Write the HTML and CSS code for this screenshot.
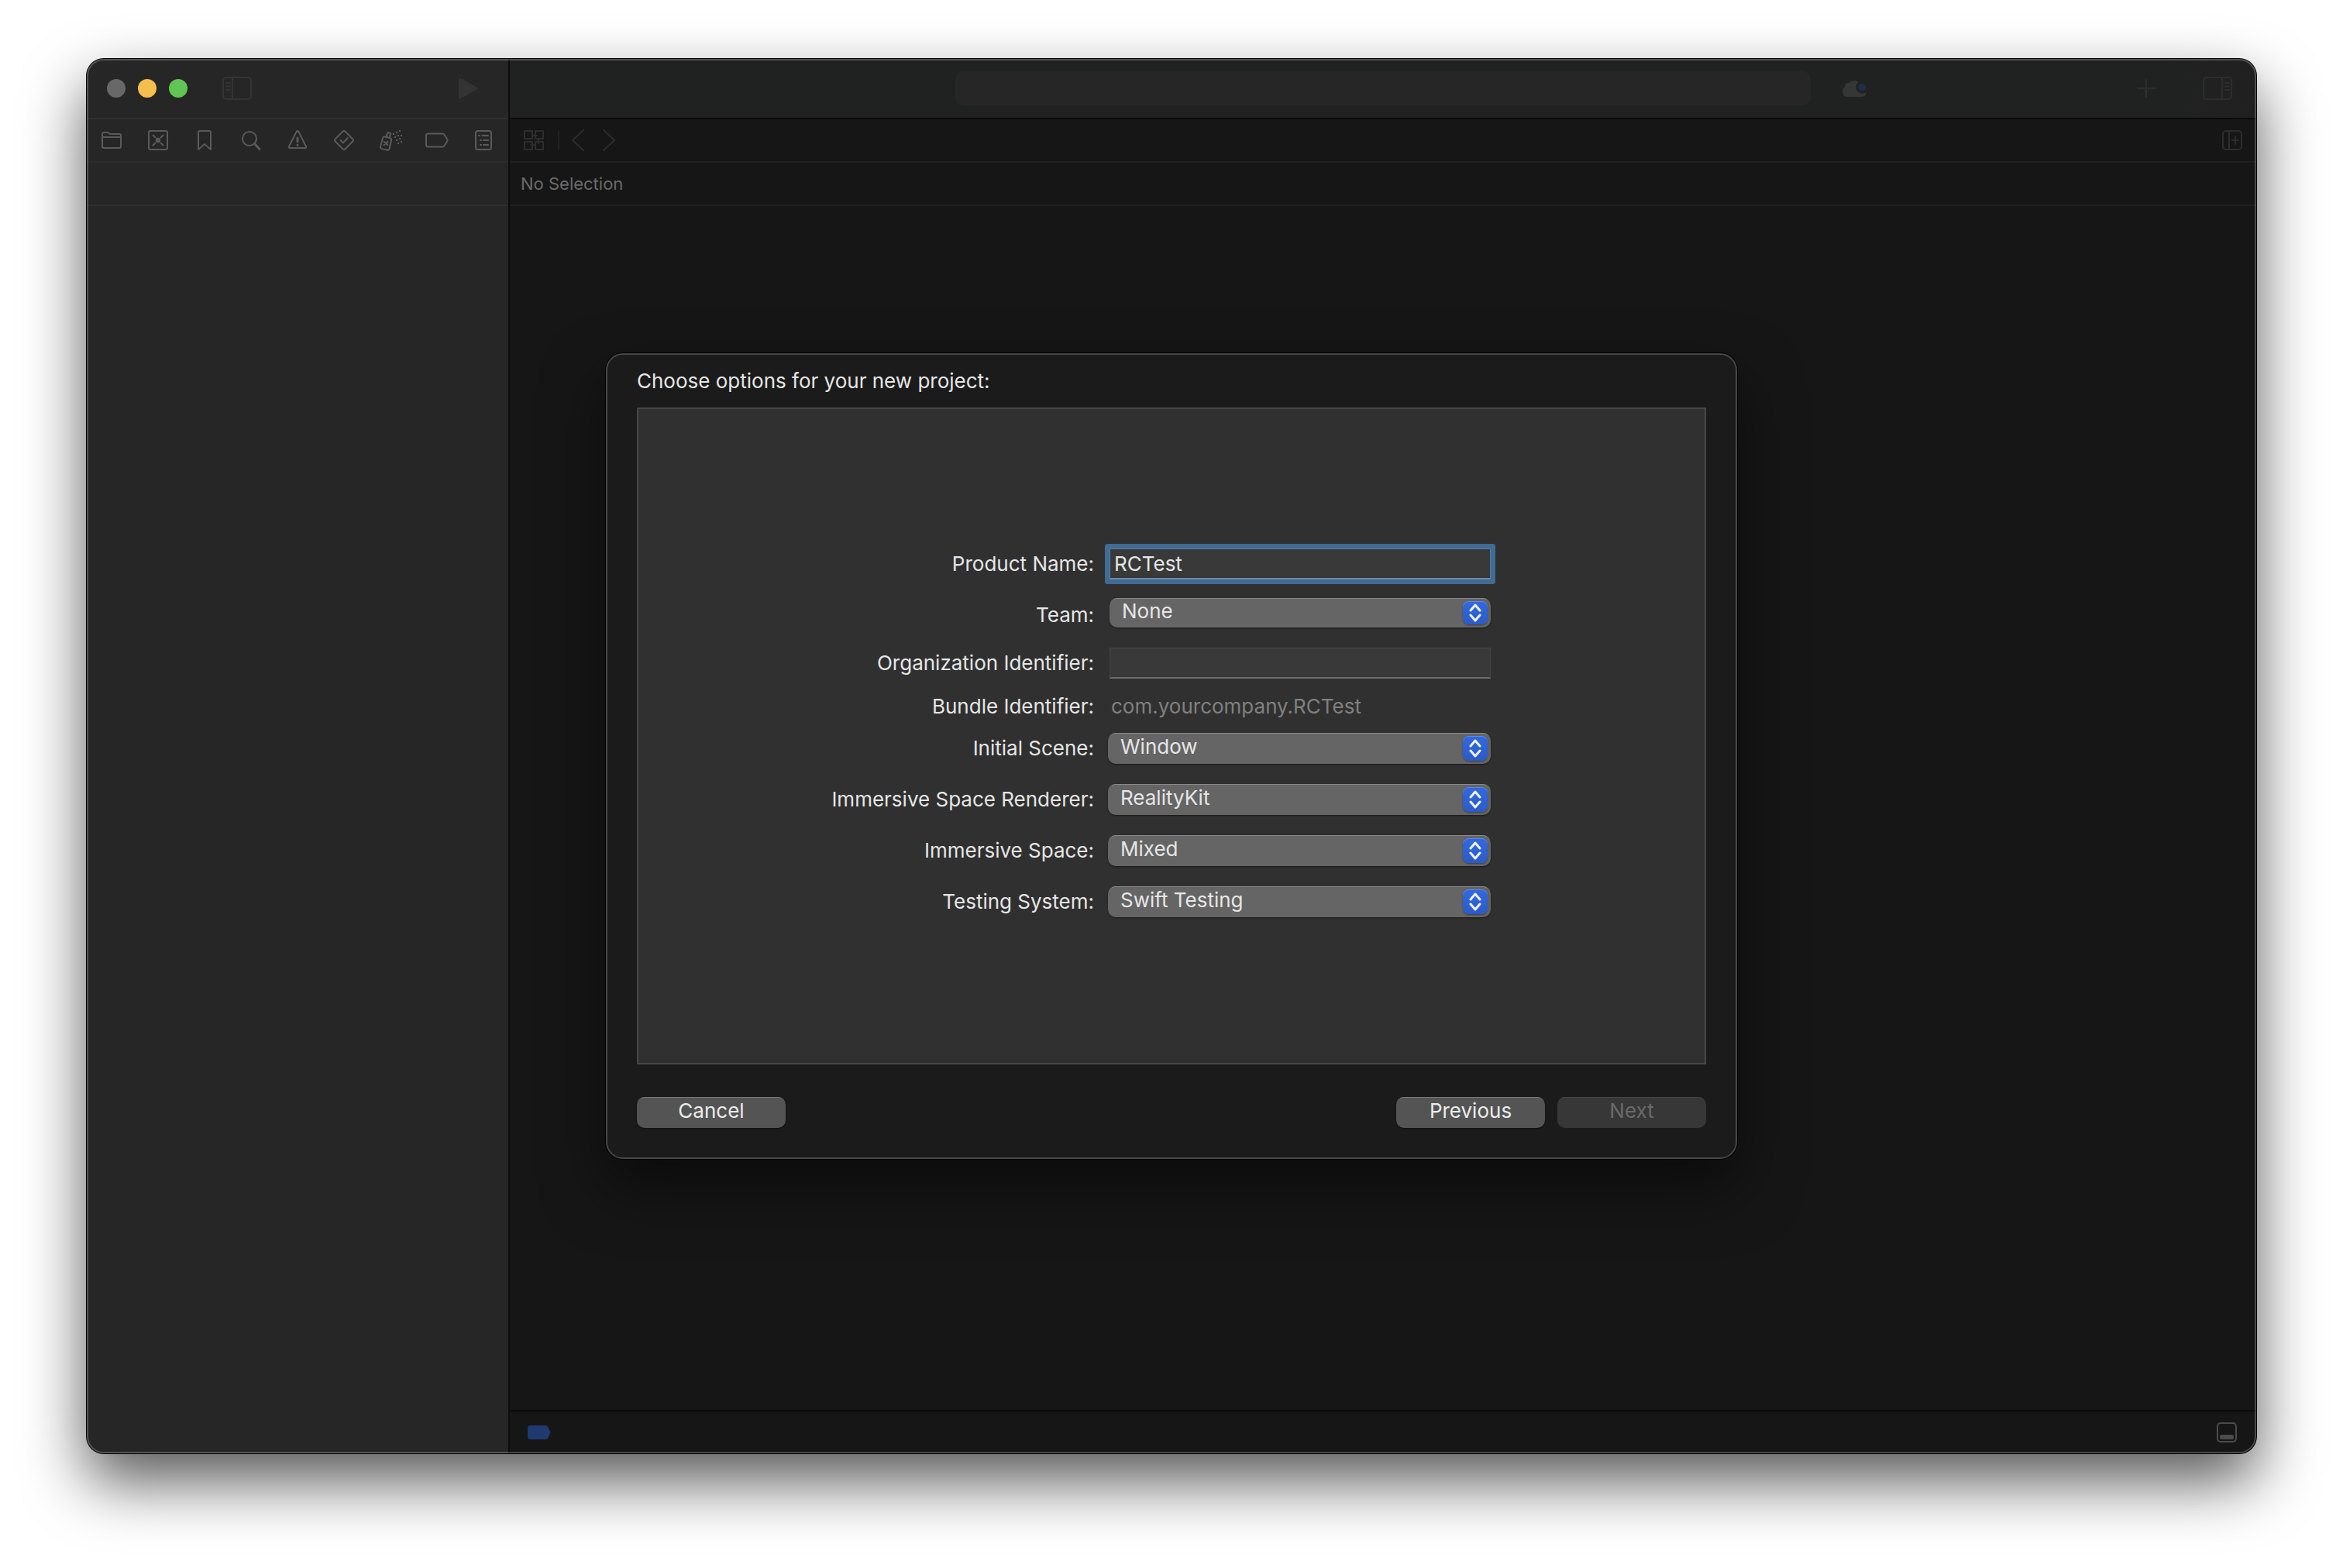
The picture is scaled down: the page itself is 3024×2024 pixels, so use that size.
FILE: index.html
```
<!DOCTYPE html>
<html lang="en">
<head>
  <meta charset="UTF-8" />
  <meta name="viewport" content="width=device-width, initial-scale=1.0"/>
  <title>New Project</title>
  <link rel="stylesheet" href="styles.css">
</head>
<body>

  <div class="window">

    <aside class="sidebar">
      <div class="titlebar">
        <div class="lights">
          <button class="light close" aria-label="Close"></button>
          <button class="light minimize" aria-label="Minimize"></button>
          <button class="light zoom" aria-label="Zoom"></button>
        </div>
        <button class="icon-btn toggle" aria-label="Toggle navigator">
          <svg width="38" height="30" viewBox="0 0 38 30"><rect x="1" y="1" width="36" height="28" rx="4"/><path d="M13 1v28M5 8h5M5 12.500h5M5 17h5"/></svg>
        </button>
        <button class="icon-btn" aria-label="Run">
          <svg width="28" height="28" viewBox="0 0 28 28"><path class="solid" d="M3 1.500v25L26 14z"/></svg>
        </button>
      </div>

      <nav class="navigators">
        <button class="icon-btn" aria-label="Project">
          <svg width="28" height="28" viewBox="0 0 28 28"><path d="M2 22V6q0-2 2-2h5l3 2h12q2 0 2 2v14q0 2-2 2H4q-2 0-2-2zM2 10h24"/></svg>
        </button>
        <button class="icon-btn" aria-label="Source control">
          <svg width="28" height="28" viewBox="0 0 28 28"><rect x="2" y="2" width="24" height="24" rx="2"/><path d="M7.500 7.500l3 3M20.500 7.500l-3 3M7.500 20.500l3-3M20.500 20.500l-3-3"/><circle class="solid" cx="14" cy="14" r="2.200"/></svg>
        </button>
        <button class="icon-btn" aria-label="Bookmarks">
          <svg width="28" height="28" viewBox="0 0 28 28"><path d="M6 26V4q0-2 2-2h12q2 0 2 2v22l-8-7z"/></svg>
        </button>
        <button class="icon-btn" aria-label="Find">
          <svg width="28" height="28" viewBox="0 0 28 28"><circle cx="12" cy="12" r="9"/><path d="M18.500 18.500l6.500 7" stroke-width="3"/></svg>
        </button>
        <button class="icon-btn" aria-label="Issues">
          <svg width="28" height="28" viewBox="0 0 28 28"><path d="M12.700 3q1.300-2 2.600 0L25 22q.7 2-1.200 2H4.200Q2.300 24 3 22z"/><path d="M14 11v5" stroke-width="3"/><circle class="solid" cx="14" cy="20.300" r=".6"/></svg>
        </button>
        <button class="icon-btn" aria-label="Tests">
          <svg width="28" height="28" viewBox="0 0 28 28"><path d="M12.700 2.500q1.300-1.200 2.600 0l10.200 10.200q1.200 1.300 0 2.600L15.300 25.500q-1.300 1.200-2.600 0L2.500 15.300q-1.200-1.300 0-2.600zM9.500 14l3.300 3.500 6-6.500"/></svg>
        </button>
        <button class="icon-btn" aria-label="Debug">
          <svg width="30" height="28" viewBox="0 0 30 28"><path d="M5 11.500q.5-2.500 2.800-2l6.500 1.700q2.300.7 1.800 2.800L13.500 25q-.6 2.300-2.800 1.800l-6.900-1.700q-2.300-.7-1.800-2.800zM9.800 9.500L11.200 4l4 1L13.800 10.700M6.700 16l4.600 4M11.500 15.700l-5 4.600"/><path class="spray" d="M22 4h2M26 2h2M18 6h2M24 8h2M28 8h2M20 10h2M22 14h2M26 12h2M28 16h2M24 18h2"/></svg>
        </button>
        <button class="icon-btn" aria-label="Breakpoints">
          <svg width="30" height="28" viewBox="0 0 30 28"><path d="M1 20V8q0-2.500 2.500-2.500H22q1.700 0 2.600 1.500l3.600 5.800q.7 1.200 0 2.400L24.600 21q-.9 1.500-2.600 1.500H3.500Q1 22.500 1 20z"/></svg>
        </button>
        <button class="icon-btn" aria-label="Reports">
          <svg width="28" height="28" viewBox="0 0 28 28"><rect x="4" y="2" width="20" height="24" rx="2.500"/><path d="M8 8h1M12.500 8H20M10 14h1M14 14h6M10 20h1M14 20h6"/></svg>
        </button>
      </nav>
      <div class="subbar"></div>
    </aside>

    <main class="editor">
      <header class="toolbar">
        <div class="activity"></div>
        <div class="toolbar-right">
          <button class="icon-btn" aria-label="Cloud status">
            <svg class="cloud" width="34" height="24" viewBox="0 0 34 24"><path class="solid" d="M7 22Q2 21.500 2 16.500 2 12 5 11 5 5.500 10 5.500 13 2.500 18 3q3 .7 4.500 3.500L30.500 17q0 4.500-4.500 5z"/><circle class="badge" cx="26.300" cy="10.700" r="6.500"/></svg>
          </button>
          <button class="icon-btn add" aria-label="Add">
            <svg width="24" height="24" viewBox="0 0 24 24"><path d="M12 1v22M1 12h22"/></svg>
          </button>
          <button class="icon-btn" aria-label="Toggle inspector">
            <svg width="38" height="30" viewBox="0 0 38 30"><rect x="1" y="1" width="36" height="28" rx="4"/><path d="M25 1v28M29 8h5M29 12.500h5M29 17h5"/></svg>
          </button>
        </div>
      </header>

      <div class="tabbar">
        <button class="icon-btn" aria-label="Related items">
          <svg width="26" height="26" viewBox="0 0 26 26"><path d="M1 1h10v10H1zM15 1h10v10H15zM1 15h10v10H1zM15 15h10v10H15zM11 7h6M19 11v6M9 19h6"/></svg>
        </button>
        <span class="divider"></span>
        <button class="icon-btn" aria-label="Back">
          <svg width="16" height="28" viewBox="0 0 16 28"><path d="M15 1L1 14l14 13"/></svg>
        </button>
        <button class="icon-btn forward" aria-label="Forward">
          <svg width="16" height="28" viewBox="0 0 16 28"><path d="M1 1l14 13L1 27"/></svg>
        </button>
        <button class="icon-btn split" aria-label="Add editor">
          <svg width="26" height="26" viewBox="0 0 26 26"><rect x="1" y="1" width="24" height="24" rx="4"/><path d="M9 1v24M13 13h8M17 8v10"/></svg>
        </button>
      </div>

      <div class="pathbar">No Selection</div>

      <div class="canvas"></div>

      <footer class="debugbar">
        <button class="icon-btn" aria-label="Toggle breakpoints">
          <svg class="tag" width="30" height="18" viewBox="0 0 30 18"><path d="M3 0h20q2 0 3 1.500L29 7.500q.8 1.500 0 3l-3 6q-1 1.500-3 1.500H3q-3 0-3-3V3q0-3 3-3z"/></svg>
        </button>
        <button class="icon-btn panel" aria-label="Toggle debug area">
          <svg width="26" height="26" viewBox="0 0 26 26"><rect x="1" y="1" width="24" height="24" rx="4"/><rect class="solid" x="5" y="17" width="16" height="4" rx="1"/></svg>
        </button>
      </footer>
    </main>

    <div class="overlay">
      <form class="dialog" onsubmit="return false">
        <h1>Choose options for your new project:</h1>

        <div class="panel-box">
          <div class="group identity">
            <div class="row product">
              <label for="product">Product Name:</label>
              <input class="text-field focused" id="product" type="text" value="RCTest">
            </div>
            <div class="row team">
              <label for="team">Team:</label>
              <div class="popup">
                <select id="team"><option>None</option></select>
                <span class="stepper"><svg width="16" height="24" viewBox="0 0 16 24"><path d="M2 9l6-7 6 7M2 15l6 7 6-7"/></svg></span>
              </div>
            </div>
            <div class="row">
              <label for="org">Organization Identifier:</label>
              <input class="text-field" id="org" type="text">
            </div>
            <div class="row bundle">
              <label for="bundle">Bundle Identifier:</label>
              <output id="bundle">com.yourcompany.RCTest</output>
            </div>
          </div>

          <div class="group scene">
            <div class="row">
              <label for="initial">Initial Scene:</label>
              <div class="popup">
                <select id="initial"><option>Window</option></select>
                <span class="stepper"><svg width="16" height="24" viewBox="0 0 16 24"><path d="M2 9l6-7 6 7M2 15l6 7 6-7"/></svg></span>
              </div>
            </div>
            <div class="row">
              <label for="renderer">Immersive Space Renderer:</label>
              <div class="popup">
                <select id="renderer"><option>RealityKit</option></select>
                <span class="stepper"><svg width="16" height="24" viewBox="0 0 16 24"><path d="M2 9l6-7 6 7M2 15l6 7 6-7"/></svg></span>
              </div>
            </div>
            <div class="row">
              <label for="space">Immersive Space:</label>
              <div class="popup">
                <select id="space"><option>Mixed</option></select>
                <span class="stepper"><svg width="16" height="24" viewBox="0 0 16 24"><path d="M2 9l6-7 6 7M2 15l6 7 6-7"/></svg></span>
              </div>
            </div>
            <div class="row">
              <label for="testing">Testing System:</label>
              <div class="popup">
                <select id="testing"><option>Swift Testing</option></select>
                <span class="stepper"><svg width="16" height="24" viewBox="0 0 16 24"><path d="M2 9l6-7 6 7M2 15l6 7 6-7"/></svg></span>
              </div>
            </div>
          </div>
        </div>

        <div class="actions">
          <button type="button" class="btn cancel">Cancel</button>
          <button type="button" class="btn">Previous</button>
          <button type="submit" class="btn" disabled>Next</button>
        </div>
      </form>
    </div>

  </div>

</body>
</html>
```

FILE: styles.css
```
:root {
  --sidebar-bg: #262626;
  --editor-bg: #161616;
  --toolbar-bg: #202221;
  --text: #e6e6e6;
}

* {
  box-sizing: border-box;
}

body {
  margin: 0;
  min-height: 100vh;
  padding: 76px 112px 148px;
  display: flex;
  background-color: #fff;
  color: var(--text);
  font-family: Inter, "Liberation Sans", sans-serif;
  font-size: 26px;
  line-height: 32px;
}

button,
input,
select {
  font: inherit;
  color: inherit;
}

.window {
  position: relative;
  flex: 1;
  display: flex;
  border-radius: 22px;
  background-color: var(--editor-bg);
  box-shadow: 0 0 0 1px #000, 0 36px 80px rgba(0, 0, 0, 0.66);
}

/* light rim on top of the window content */
.window::after {
  content: "";
  position: absolute;
  inset: 0;
  border: 2px solid rgba(255, 255, 255, 0.22);
  border-radius: 22px;
  pointer-events: none;
}

.icon-btn {
  display: flex;
  align-items: center;
  justify-content: center;
  padding: 0;
  border: none;
  background: none;
}

.icon-btn svg {
  display: block;
  fill: none;
  stroke: currentColor;
  stroke-width: 2;
  stroke-linecap: round;
  stroke-linejoin: round;
}

.icon-btn .solid {
  fill: currentColor;
}

/* sidebar */
.sidebar {
  width: 546px;
  border-right: 2px solid #0c0c0c;
  border-radius: 22px 0 0 22px;
  background-color: var(--sidebar-bg);
}

.titlebar {
  height: 78px;
  padding: 0 38px 0 26px;
  display: flex;
  align-items: center;
  border-bottom: 2px solid #2e2e2e;
  color: #343434;
}

.lights {
  display: flex;
  gap: 16px;
}

.light {
  width: 24px;
  height: 24px;
  padding: 0;
  border: none;
  border-radius: 50%;
}

.close {
  background-color: #686868;
}

.minimize {
  background-color: #f5bf4f;
}

.zoom {
  background-color: #61c554;
}

.toggle {
  margin-left: 45px;
  margin-right: auto;
}

.navigators {
  height: 56px;
  padding: 0 2px;
  display: flex;
  border-bottom: 2px solid #2e2e2e;
  color: #5a5a5a;
}

.navigators .icon-btn {
  flex: 1;
}

.navigators .spray {
  stroke-linecap: butt;
}

.subbar {
  height: 56px;
  border-bottom: 2px solid #2e2e2e;
}

/* editor */
.editor {
  flex: 1;
  display: flex;
  flex-direction: column;
  color: #2d2d2d;
}

.toolbar {
  height: 78px;
  display: grid;
  grid-template-columns: 1fr 49% 1fr;
  align-items: center;
  border-bottom: 2px solid #0b0b0b;
  border-top-right-radius: 22px;
  background: linear-gradient(to right, var(--toolbar-bg) 95%, #212020);
}

.activity {
  grid-column: 2;
  height: 44px;
  border-radius: 10px;
  background-color: #262626;
}

.toolbar-right {
  padding: 0 31px 0 40px;
  display: flex;
  align-items: center;
}

.cloud {
  color: #363636;
}

.cloud .badge {
  fill: #202e4a;
  stroke: var(--toolbar-bg);
  stroke-width: 3;
}

.add {
  margin-left: auto;
  margin-right: 61px;
}

.tabbar {
  height: 56px;
  padding: 0 18px;
  display: flex;
  align-items: center;
  border-bottom: 2px solid #202020;
}

.divider {
  width: 2px;
  height: 24px;
  margin: 0 16px 0 18px;
  background-color: #222;
}

.forward {
  margin-left: 24px;
}

.split {
  margin-left: auto;
}

.pathbar {
  height: 56px;
  padding: 0 14px;
  border-bottom: 2px solid #202020;
  color: #6a6a6a;
  font-size: 22px;
  line-height: 54px;
}

.canvas {
  flex: 1;
}

.debugbar {
  height: 56px;
  padding: 0 25px 0 23px;
  display: flex;
  align-items: center;
  justify-content: space-between;
  border-top: 2px solid #0b0b0b;
}

.tag path {
  fill: #1f3a6e;
  stroke: none;
}

.panel {
  color: #4b4b4b;
}

/* dialog */
.overlay {
  position: absolute;
  inset: 0;
  display: flex;
  align-items: center;
  justify-content: center;
}

.dialog {
  width: 1460px;
  padding: 18px 38px 38px;
  border: 2px solid #474747;
  border-radius: 22px;
  background-color: #1b1b1b;
  box-shadow: 0 0 0 1px #000, 0 36px 80px rgba(0, 0, 0, 0.5);
}

h1 {
  margin: 0 0 18px;
  font-size: 26px;
  font-weight: 400;
  line-height: 32px;
}

.panel-box {
  min-height: 848px;
  padding: 180px 276px 188px 0;
  border: 2px solid #474747;
  background-color: #303030;
}

.group {
  display: flex;
  flex-direction: column;
}

.identity {
  gap: 20px;
  margin-bottom: 22px;
}

.scene {
  gap: 26px;
}

.row {
  display: grid;
  grid-template-columns: 588px 1fr;
  column-gap: 18px;
  align-items: center;
}

.identity .row {
  column-gap: 20px;
}

.product {
  margin-bottom: 4px;
}

.team {
  height: 44px;
}

.bundle {
  height: 28px;
}

label {
  text-align: right;
}

.text-field {
  width: 100%;
  height: 40px;
  padding: 0 5px;
  border: 1px solid #464646;
  border-bottom: 2px solid #6a6a6a;
  background-color: #393939;
  outline: none;
}

.focused {
  border-color: #4f7ea8;
  border-bottom-color: #7089a0;
  border-radius: 1px;
  box-shadow: 0 0 0 6px #416c93;
}

output {
  padding-left: 2px;
  color: #808080;
}

.popup {
  position: relative;
  height: 40px;
}

.team .popup {
  height: 38px;
  align-self: start;
}

.popup select {
  appearance: none;
  display: block;
  width: 100%;
  height: 100%;
  padding: 0 48px 4px 16px;
  border: none;
  border-radius: 10px;
  background-color: #656565;
  box-shadow: inset 0 2px 0 -1px #8a8a8a, 0 1px 2px rgba(0, 0, 0, 0.5);
}

.stepper {
  position: absolute;
  top: 4px;
  right: 4px;
  bottom: 4px;
  width: 32px;
  display: flex;
  align-items: center;
  justify-content: center;
  border-radius: 8px;
  background: linear-gradient(#3269e0, #2a5bc9);
  box-shadow: inset 0 1px 0 #5c88e8, 0 1px 2px rgba(0, 0, 0, 0.4);
  pointer-events: none;
}

.stepper svg {
  fill: none;
  stroke: #f0f0f0;
  stroke-width: 3;
  stroke-linecap: round;
  stroke-linejoin: round;
}

.actions {
  margin-top: 42px;
  display: flex;
  gap: 16px;
}

.btn {
  width: 192px;
  height: 40px;
  padding: 0 0 4px;
  border: none;
  border-radius: 10px;
  background-color: #545454;
  color: #ececec;
  box-shadow: inset 0 2px 0 -1px #7a7a7a, 0 1px 2px rgba(0, 0, 0, 0.5);
}

.btn:disabled {
  background-color: #373737;
  color: #6a6a6a;
  box-shadow: inset 0 2px 0 -1px #484848;
}

.cancel {
  margin-right: auto;
}
```
